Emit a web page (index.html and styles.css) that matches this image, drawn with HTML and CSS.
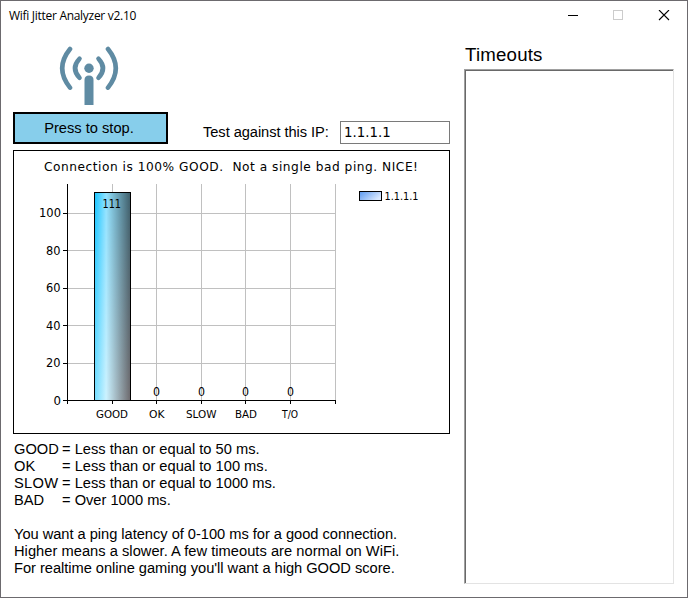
FILE: index.html
```html
<!DOCTYPE html>
<html lang="en">
<head>
<meta charset="utf-8">
<title>Wifi Jitter Analyzer v2.10</title>
<link rel="stylesheet" href="styles.css">
</head>
<body>
<div class="window">
  <header class="titlebar">
    <span class="caption">Wifi Jitter Analyzer v2.10</span>
    <svg class="controls" width="104" height="12" viewBox="0 0 104 12" shape-rendering="crispEdges">
      <path d="M0 5.5h10" stroke="#000"/>
      <rect x="45.5" y=".5" width="9" height="9" fill="none" stroke="#ccc"/>
      <path d="M91 0l10 10M101 0L91 10" stroke="#000" stroke-width="1.1" shape-rendering="auto"/>
    </svg>
  </header>
  <main class="content">
    <section class="left">
      <svg class="wifi" width="60" height="60" viewBox="59 46 60 60">
        <g fill="none" stroke="#5f8ba3" stroke-width="4.6" stroke-linecap="round">
          <path d="M79.5 58.700Q70.600 68.200 79.500 77.700M98.500 58.700Q107.400 68.200 98.500 77.700"/>
          <path d="M70 49Q54.400 68.300 70 87.600M108 49Q123.600 68.300 108 87.600"/>
        </g>
        <circle cx="89" cy="68.300" r="4.700" fill="#5f8ba3"/>
        <path d="M84.500 105V80Q84.500 75.500 89 75.500T93.500 80V105Z" fill="#5f8ba3"/>
      </svg>
      <div class="toolbar">
        <button class="stop"><span>Press to stop.</span></button>
        <label class="ip-label" for="ip">Test against this IP:</label>
        <input class="ip" id="ip" value="1.1.1.1">
      </div>
      <svg class="chart" width="437" height="284" viewBox="13 150 437 284">
        <defs>
          <linearGradient id="barTop"><stop offset="0" stop-color="#12c3ff"/><stop offset=".33" stop-color="#91e2ff"/><stop offset="1" stop-color="#3d5c68"/></linearGradient>
          <linearGradient id="barBottom"><stop offset="0" stop-color="#70dcff"/><stop offset=".33" stop-color="#cdf2ff"/><stop offset="1" stop-color="#6b6669"/></linearGradient>
          <linearGradient id="fade" x2="0" y2="1"><stop offset="0" stop-color="#000"/><stop offset="1" stop-color="#fff"/></linearGradient>
          <linearGradient id="legendFill" x2="1" y2=".5"><stop offset="0" stop-color="#5a98ee"/><stop offset="1" stop-color="#d9e8ff"/></linearGradient>
          <mask id="barMask"><rect x="94" y="192" width="37" height="209" fill="url(#fade)"/></mask>
        </defs>
        <rect x="13.500" y="150.500" width="436" height="283" fill="#fff" stroke="#000"/>
        <path class="grid" d="M68 213.500H335M68 250.500H335M68 288.500H335M68 325.500H335M68 363.500H335M112.500 184V400M156.500 184V400M201.500 184V400M245.500 184V400M290.500 184V400M335.500 184V400"/>
        <rect x="94" y="192" width="37" height="209" fill="url(#barTop)"/>
        <rect x="94" y="192" width="37" height="209" fill="url(#barBottom)" mask="url(#barMask)"/>
        <rect x="94.500" y="192.500" width="36" height="208" fill="none" stroke="#000"/>
        <path class="axis" d="M67.500 184V404M63 400.500H336M63 213.500H67M63 250.500H67M63 288.500H67M63 325.500H67M63 363.500H67M112.500 401V404M156.500 401V404M201.500 401V404M245.500 401V404M290.500 401V404M335.500 401V404"/>
        <text class="title" x="44" y="171" textLength="374" lengthAdjust="spacing">Connection is 100% GOOD.&#160; Not a single bad ping. NICE!</text>
        <g class="scale">
          <text x="39" y="217" textLength="22" lengthAdjust="spacingAndGlyphs">100</text>
          <text x="46" y="255" textLength="14.500" lengthAdjust="spacingAndGlyphs">80</text>
          <text x="46" y="292" textLength="14.500" lengthAdjust="spacingAndGlyphs">60</text>
          <text x="46" y="330" textLength="14.500" lengthAdjust="spacingAndGlyphs">40</text>
          <text x="46" y="367" textLength="14.500" lengthAdjust="spacingAndGlyphs">20</text>
          <text x="53.500" y="405" textLength="7.500" lengthAdjust="spacingAndGlyphs">0</text>
        </g>
        <g class="value">
          <text x="102.500" y="208" textLength="18.500" lengthAdjust="spacingAndGlyphs">111</text>
          <text x="153" y="396" textLength="7" lengthAdjust="spacingAndGlyphs">0</text>
          <text x="198" y="396" textLength="7" lengthAdjust="spacingAndGlyphs">0</text>
          <text x="242" y="396" textLength="7" lengthAdjust="spacingAndGlyphs">0</text>
          <text x="287" y="396" textLength="7" lengthAdjust="spacingAndGlyphs">0</text>
        </g>
        <g class="category">
          <text x="96" y="418" textLength="32" lengthAdjust="spacingAndGlyphs">GOOD</text>
          <text x="149" y="418" textLength="15.500" lengthAdjust="spacingAndGlyphs">OK</text>
          <text x="186" y="418" textLength="30.500" lengthAdjust="spacingAndGlyphs">SLOW</text>
          <text x="235" y="418" textLength="22" lengthAdjust="spacingAndGlyphs">BAD</text>
          <text x="282" y="418" textLength="16" lengthAdjust="spacingAndGlyphs">T/O</text>
          <text x="384.500" y="200" textLength="34" lengthAdjust="spacingAndGlyphs">1.1.1.1</text>
        </g>
        <rect x="359.500" y="191.500" width="22" height="9" fill="url(#legendFill)" stroke="#000"/>
      </svg>
      <dl class="legend">
        <dt>GOOD</dt><dd>= Less than or equal to 50 ms.</dd>
        <dt>OK</dt><dd>= Less than or equal to 100 ms.</dd>
        <dt class="slow">SLOW</dt><dd>= Less than or equal to 1000 ms.</dd>
        <dt>BAD</dt><dd>= Over 1000 ms.</dd>
      </dl>
      <p class="notes"><span class="tight">You want a ping latency of 0-100 ms for a good connection.</span><br><span class="loose">Higher means a slower. A few timeouts are normal on WiFi.</span><br><span class="tight">For realtime online gaming you'll want a high GOOD score.</span></p>
    </section>
    <section class="right">
      <h2 class="heading">Timeouts</h2>
      <div class="list"></div>
    </section>
  </main>
</div>
</body>
</html>
```
FILE: styles.css
```css
* { box-sizing: border-box; }
body { margin: 0; background: #fff; color: #000; font: 14.67px/17px "Liberation Sans", Arial, sans-serif; }
.window { width: 688px; height: 598px; border: 1px solid #6c6a6e; display: flex; flex-direction: column; overflow: hidden; }
.titlebar { height: 30px; flex: none; display: flex; justify-content: space-between; padding: 0 15px 0 8px; }
.caption { font: 12px/29px "Open Sans", "Noto Sans", sans-serif; letter-spacing: -.29px; white-space: pre; }
.controls { margin-top: 9px; }
.content { flex: 1; display: flex; gap: 14px; padding-left: 12px; }
.left { width: 437px; display: flex; flex-direction: column; white-space: nowrap; }
.wifi { margin: 15px 0 0 46px; flex: none; }
.toolbar { display: flex; margin-top: 6px; height: 32px; }
.stop { width: 155px; height: 32px; border: 2px solid #000; border-radius: 0; background: #87ceeb; font: inherit; color: #000; padding: 0 3px 0 0; }
.ip-label { margin-left: 35px; width: 137px; padding-top: 12px; letter-spacing: -.06px; }
.ip { width: 110px; height: 23px; margin-top: 9px; border: 1px solid #7a7a7a; padding: 0 3px; font: 13.33px "DejaVu Sans", sans-serif; color: #000; outline: 0; }
.chart { margin-top: 6px; flex: none; font-family: "DejaVu Sans", sans-serif; }
.chart rect, .grid, .axis { shape-rendering: crispEdges; }
.grid { stroke: #c0c0c0; fill: none; }
.axis { stroke: #000; fill: none; }
.title { font-size: 12.2px; }
.scale { font-size: 13px; }
.value { font-size: 12px; }
.category { font-size: 11px; }
.legend { margin: 7px 0 0 1px; display: grid; grid-template-columns: 48px auto; grid-auto-rows: 17px; }
.legend dt, .legend dd { margin: 0; }
.legend .slow { letter-spacing: .3px; }
.notes { margin: 17px 0 0 1px; }
.tight { letter-spacing: -.03px; }
.loose { letter-spacing: .03px; }
.right { width: 210px; }
.heading { margin: 13px 0 0 1px; font-size: 18.67px; line-height: 22px; font-weight: normal; letter-spacing: .2px; }
.list { height: 515px; margin-top: 3px; border: 1px solid; border-color: #a0a0a0 #e3e3e3 #e3e3e3 #a0a0a0; box-shadow: inset 1px 1px 0 #696969; }
```
